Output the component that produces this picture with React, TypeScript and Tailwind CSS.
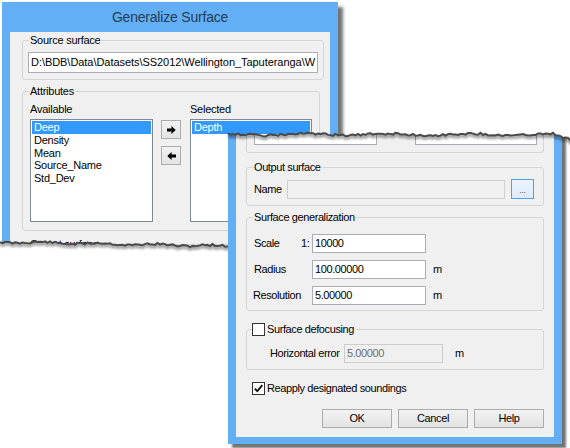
type Pt = [number, number];

// jagged torn-paper edge, deterministic jitter
function tear(x0: number, x1: number, base: (x: number) => number, seed: number): Pt[] {
  const pts: Pt[] = [];
  let s = seed;
  for (let x = x0; x <= x1; x += 2.5) {
    s = (s * 9301 + 49297) % 233280;
    pts.push([x, base(x) + (s / 233280 - 0.5) * 2.2]);
  }
  return pts;
}

const pathOf = (pts: Pt[], dx = 0, dy = 0) =>
  pts.map(([x, y], i) => `${i ? "L" : "M"}${(x - dx).toFixed(1)} ${(y - dy).toFixed(1)}`).join(" ");

const T1 = tear(0, 356, (x) => 242 + x * 0.018 + 0.8 * Math.sin(x / 9), 11);
const T2 = tear(228, 574, (x) => 134.5 + 0.9 * Math.sin(x / 13) + (x > 553 ? (x - 553) * 0.3 : 0), 29);

const CLIP1 = `M-10 -10 L360 -10 ${[...T1]
  .reverse()
  .map(([x, y]) => `L${(x - 2).toFixed(1)} ${(y - 2).toFixed(1)}`)
  .join(" ")} Z`;
const CLIP2 = `M-10 ${(T2[0][1] - 126).toFixed(1)} ${pathOf(T2, 228, 126).replace(/^M/, "L")} L360 340 L-10 340 Z`;

function Field({ className = "", children }: { className?: string; children?: React.ReactNode }) {
  return (
    <div className={`h-[19px] border border-[#abadb3] bg-white px-[2px] leading-[17px] whitespace-nowrap overflow-hidden ${className}`}>
      {children}
    </div>
  );
}

function Btn({ className = "", children }: { className?: string; children?: React.ReactNode }) {
  return (
    <div
      className={`h-[19px] border border-[#acacac] bg-linear-to-b from-[#f2f2f2] to-[#e3e3e3] flex items-center justify-center ${className}`}
    >
      {children}
    </div>
  );
}

function Check({ checked = false }: { checked?: boolean }) {
  return (
    <div className="w-[13px] h-[13px] border border-[#333] bg-white flex items-center justify-center shrink-0">
      {checked && (
        <svg width="11" height="11" viewBox="0 0 11 11">
          <path d="M1.8 5.6 L4.3 8.2 L9.3 2.2" fill="none" stroke="#111" strokeWidth="1.9" />
        </svg>
      )}
    </div>
  );
}

function Arrow({ left = false }: { left?: boolean }) {
  return (
    <svg width="9" height="8" viewBox="0 0 9 8">
      <path d={left ? "M9 2.6 H4.6 V0 L0.3 4 L4.6 8 V5.4 H9 Z" : "M0 2.6 H4.4 V0 L8.7 4 L4.4 8 V5.4 H0 Z"} fill="#000" />
    </svg>
  );
}

const group = "border border-[#d5d5d5] rounded-[3px]";

export default function App() {
  return (
    <div className="relative w-[570px] h-[448px] overflow-hidden bg-white font-['Liberation_Sans',Arial,sans-serif] text-[11px] tracking-[-0.4px] text-black">
      <svg className="absolute w-0 h-0">
        <defs>
          <clipPath id="tear1" clipPathUnits="userSpaceOnUse">
            <path d={CLIP1} />
          </clipPath>
          <clipPath id="tear2" clipPathUnits="userSpaceOnUse">
            <path d={CLIP2} />
          </clipPath>
        </defs>
      </svg>

      {/* first window: Generalize Surface */}
      <div className="absolute left-[2px] top-[2px] w-[346px] h-[252px] [clip-path:url(#tear1)]">
        <div className="w-[336px] h-[262px] bg-[#62aff5] px-[8px] flex flex-col shadow-[5px_5px_3px_rgba(0,0,0,0.55)]">
          <div className="h-[30px] shrink-0 flex items-center justify-center text-[14px] tracking-[-0.2px] text-[#263d55]">
            Generalize Surface
          </div>
          <div className="flex-1 min-h-0 overflow-hidden bg-[#f0f0f0] pt-[2px] pl-[12px] tracking-[-0.25px]">
            <fieldset className={`w-[298px] ${group} px-[5px] pt-[5px] pb-[6px]`}>
              <legend className="ml-[1px] px-[1px] leading-[13px]">Source surface</legend>
              <Field className="h-[21px] leading-[19px] tracking-[-0.05px]">
                {"D:\\BDB\\Data\\Datasets\\SS2012\\Wellington_Taputeranga\\W"}
              </Field>
            </fieldset>

            <fieldset className={`mt-[5px] w-[298px] ${group} pl-[7px] pt-[5px] pb-[8px]`}>
              <legend className="-ml-[1px] px-[1px] leading-[13px]">Attributes</legend>
              <div className="flex">
                <div className="w-[123px]">
                  <div className="leading-[13px]">Available</div>
                  <div className="mt-[3px] h-[103px] border border-[#828790] bg-white p-px leading-[12.5px]">
                    <div className="bg-[#3399ff] text-white pl-[2px] h-[13px] leading-[13px]">Deep</div>
                    <div className="pl-[2px]">Density</div>
                    <div className="pl-[2px]">Mean</div>
                    <div className="pl-[2px]">Source_Name</div>
                    <div className="pl-[2px]">Std_Dev</div>
                  </div>
                </div>
                <div className="ml-[8px] pt-[17px] flex flex-col gap-[7px]">
                  <Btn className="w-[20px]">
                    <Arrow />
                  </Btn>
                  <Btn className="w-[20px]">
                    <Arrow left />
                  </Btn>
                </div>
                <div className="ml-[9px] w-[122px]">
                  <div className="leading-[13px]">Selected</div>
                  <div className="mt-[3px] h-[103px] border border-[#828790] bg-white p-px">
                    <div className="bg-[#3399ff] text-white pl-[2px] h-[13px] leading-[13px]">Depth</div>
                  </div>
                </div>
              </div>
            </fieldset>

            <fieldset className={`mt-[7px] w-[298px] h-[40px] ${group} pl-[7px]`}>
              <legend className="-ml-[1px] px-[1px] leading-[13px]">Output surface</legend>
            </fieldset>
          </div>
        </div>
      </div>

      <svg className="absolute left-0 top-0 pointer-events-none" width={570} height={448}>
        <defs>
          <filter id="blurA" filterUnits="userSpaceOnUse" x="0" y="0" width="570" height="448">
            <feGaussianBlur stdDeviation="1.3" />
          </filter>
          <filter id="blurB" filterUnits="userSpaceOnUse" x="0" y="0" width="570" height="448">
            <feGaussianBlur stdDeviation="0.5" />
          </filter>
        </defs>
        <path d={pathOf(T1, 0, -2)} fill="none" stroke="#000" strokeOpacity="0.35" strokeWidth="3.5" filter="url(#blurA)" />
        <path d={pathOf(T1)} fill="none" stroke="#4a4a4a" strokeWidth="2" filter="url(#blurB)" />
      </svg>

      {/* second window: lower part of the dialog */}
      <div className="absolute left-[228px] top-[126px] w-[342px] h-[322px] [clip-path:url(#tear2)]">
        <div className="w-[334px] h-[318px] bg-[#62aff5] px-[8px] pb-[7px] flex flex-col shadow-[4px_4px_2px_rgba(0,0,0,0.55)]">
          <div className="flex-1 min-h-0 overflow-hidden bg-[#f0f0f0] px-[10px] flex flex-col">
            <div className="h-[27px] shrink-0 border border-t-0 border-[#d5d5d5] rounded-b-[3px] flex pl-[7px]">
              <Field className="w-[123px]" />
              <Field className="ml-[38px] w-[122px]" />
            </div>

            <fieldset className={`mt-[8px] ${group} pl-[7px] pt-[5px] pb-[6px]`}>
              <legend className="-ml-[1px] px-[1px] leading-[13px]">Output surface</legend>
              <div className="flex items-center">
                <span className="w-[33px]">Name</span>
                <div className="h-[19px] w-[218px] border border-[#cfcfcf] bg-[#f0f0f0]" />
                <div className="ml-[6px] h-[20px] w-[23px] border border-[#569de5] bg-linear-to-b from-[#ecf4fc] to-[#dcecfc] flex items-end justify-center pb-[3px] text-[9px] text-[#555] leading-none">
                  ...
                </div>
              </div>
            </fieldset>

            <fieldset className={`mt-[5px] ${group} pl-[7px] pt-[10px] pb-[5px]`}>
              <legend className="-ml-[1px] px-[1px] leading-[13px]">Surface generalization</legend>
              <div className="flex flex-col gap-[7px]">
                <div className="flex items-center">
                  <span className="w-[47px]">Scale</span>
                  <span className="w-[11px]">1:</span>
                  <Field className="w-[114px]">10000</Field>
                </div>
                <div className="flex items-center">
                  <span className="w-[58px]">Radius</span>
                  <Field className="w-[114px]">100.00000</Field>
                  <span className="ml-[7px]">m</span>
                </div>
                <div className="flex items-center">
                  <span className="w-[58px] -ml-[1px] mr-[1px]">Resolution</span>
                  <Field className="w-[114px]">5.00000</Field>
                  <span className="ml-[7px]">m</span>
                </div>
              </div>
            </fieldset>

            <fieldset className={`mt-[12px] ${group} pl-[7px] pt-[8px] pb-[6px]`}>
              <legend className="-ml-[2px] pr-[2px] flex items-center gap-[2px] leading-[13px]">
                <Check />
                <span>Surface defocusing</span>
              </legend>
              <div className="flex items-center pl-[16px]">
                <span className="w-[74px]">Horizontal error</span>
                <div className="h-[19px] w-[99px] border border-[#cccccc] bg-[#f0f0f0] px-[2px] leading-[17px] text-[#6d6d6d]">
                  5.00000
                </div>
                <span className="ml-[12px]">m</span>
              </div>
            </fieldset>

            <div className="mt-[12px] ml-[6px] flex items-center gap-[2px] leading-[13px]">
              <Check checked />
              <span>Reapply designated soundings</span>
            </div>

            <div className="mt-[14px] flex justify-end gap-[6px]">
              <Btn className="w-[70px]">OK</Btn>
              <Btn className="w-[70px]">Cancel</Btn>
              <Btn className="w-[70px]">Help</Btn>
            </div>
          </div>
        </div>
      </div>

      <svg className="absolute left-0 top-0 pointer-events-none" width={570} height={448}>
        <defs>
          <filter id="blurC" filterUnits="userSpaceOnUse" x="0" y="0" width="570" height="448">
            <feGaussianBlur stdDeviation="1.3" />
          </filter>
          <filter id="blurD" filterUnits="userSpaceOnUse" x="0" y="0" width="570" height="448">
            <feGaussianBlur stdDeviation="0.5" />
          </filter>
        </defs>
        <path d={pathOf(T2, 0, -2)} fill="none" stroke="#000" strokeOpacity="0.35" strokeWidth="3.5" filter="url(#blurC)" />
        <path d={pathOf(T2)} fill="none" stroke="#4a4a4a" strokeWidth="2" filter="url(#blurD)" />
      </svg>
    </div>
  );
}
